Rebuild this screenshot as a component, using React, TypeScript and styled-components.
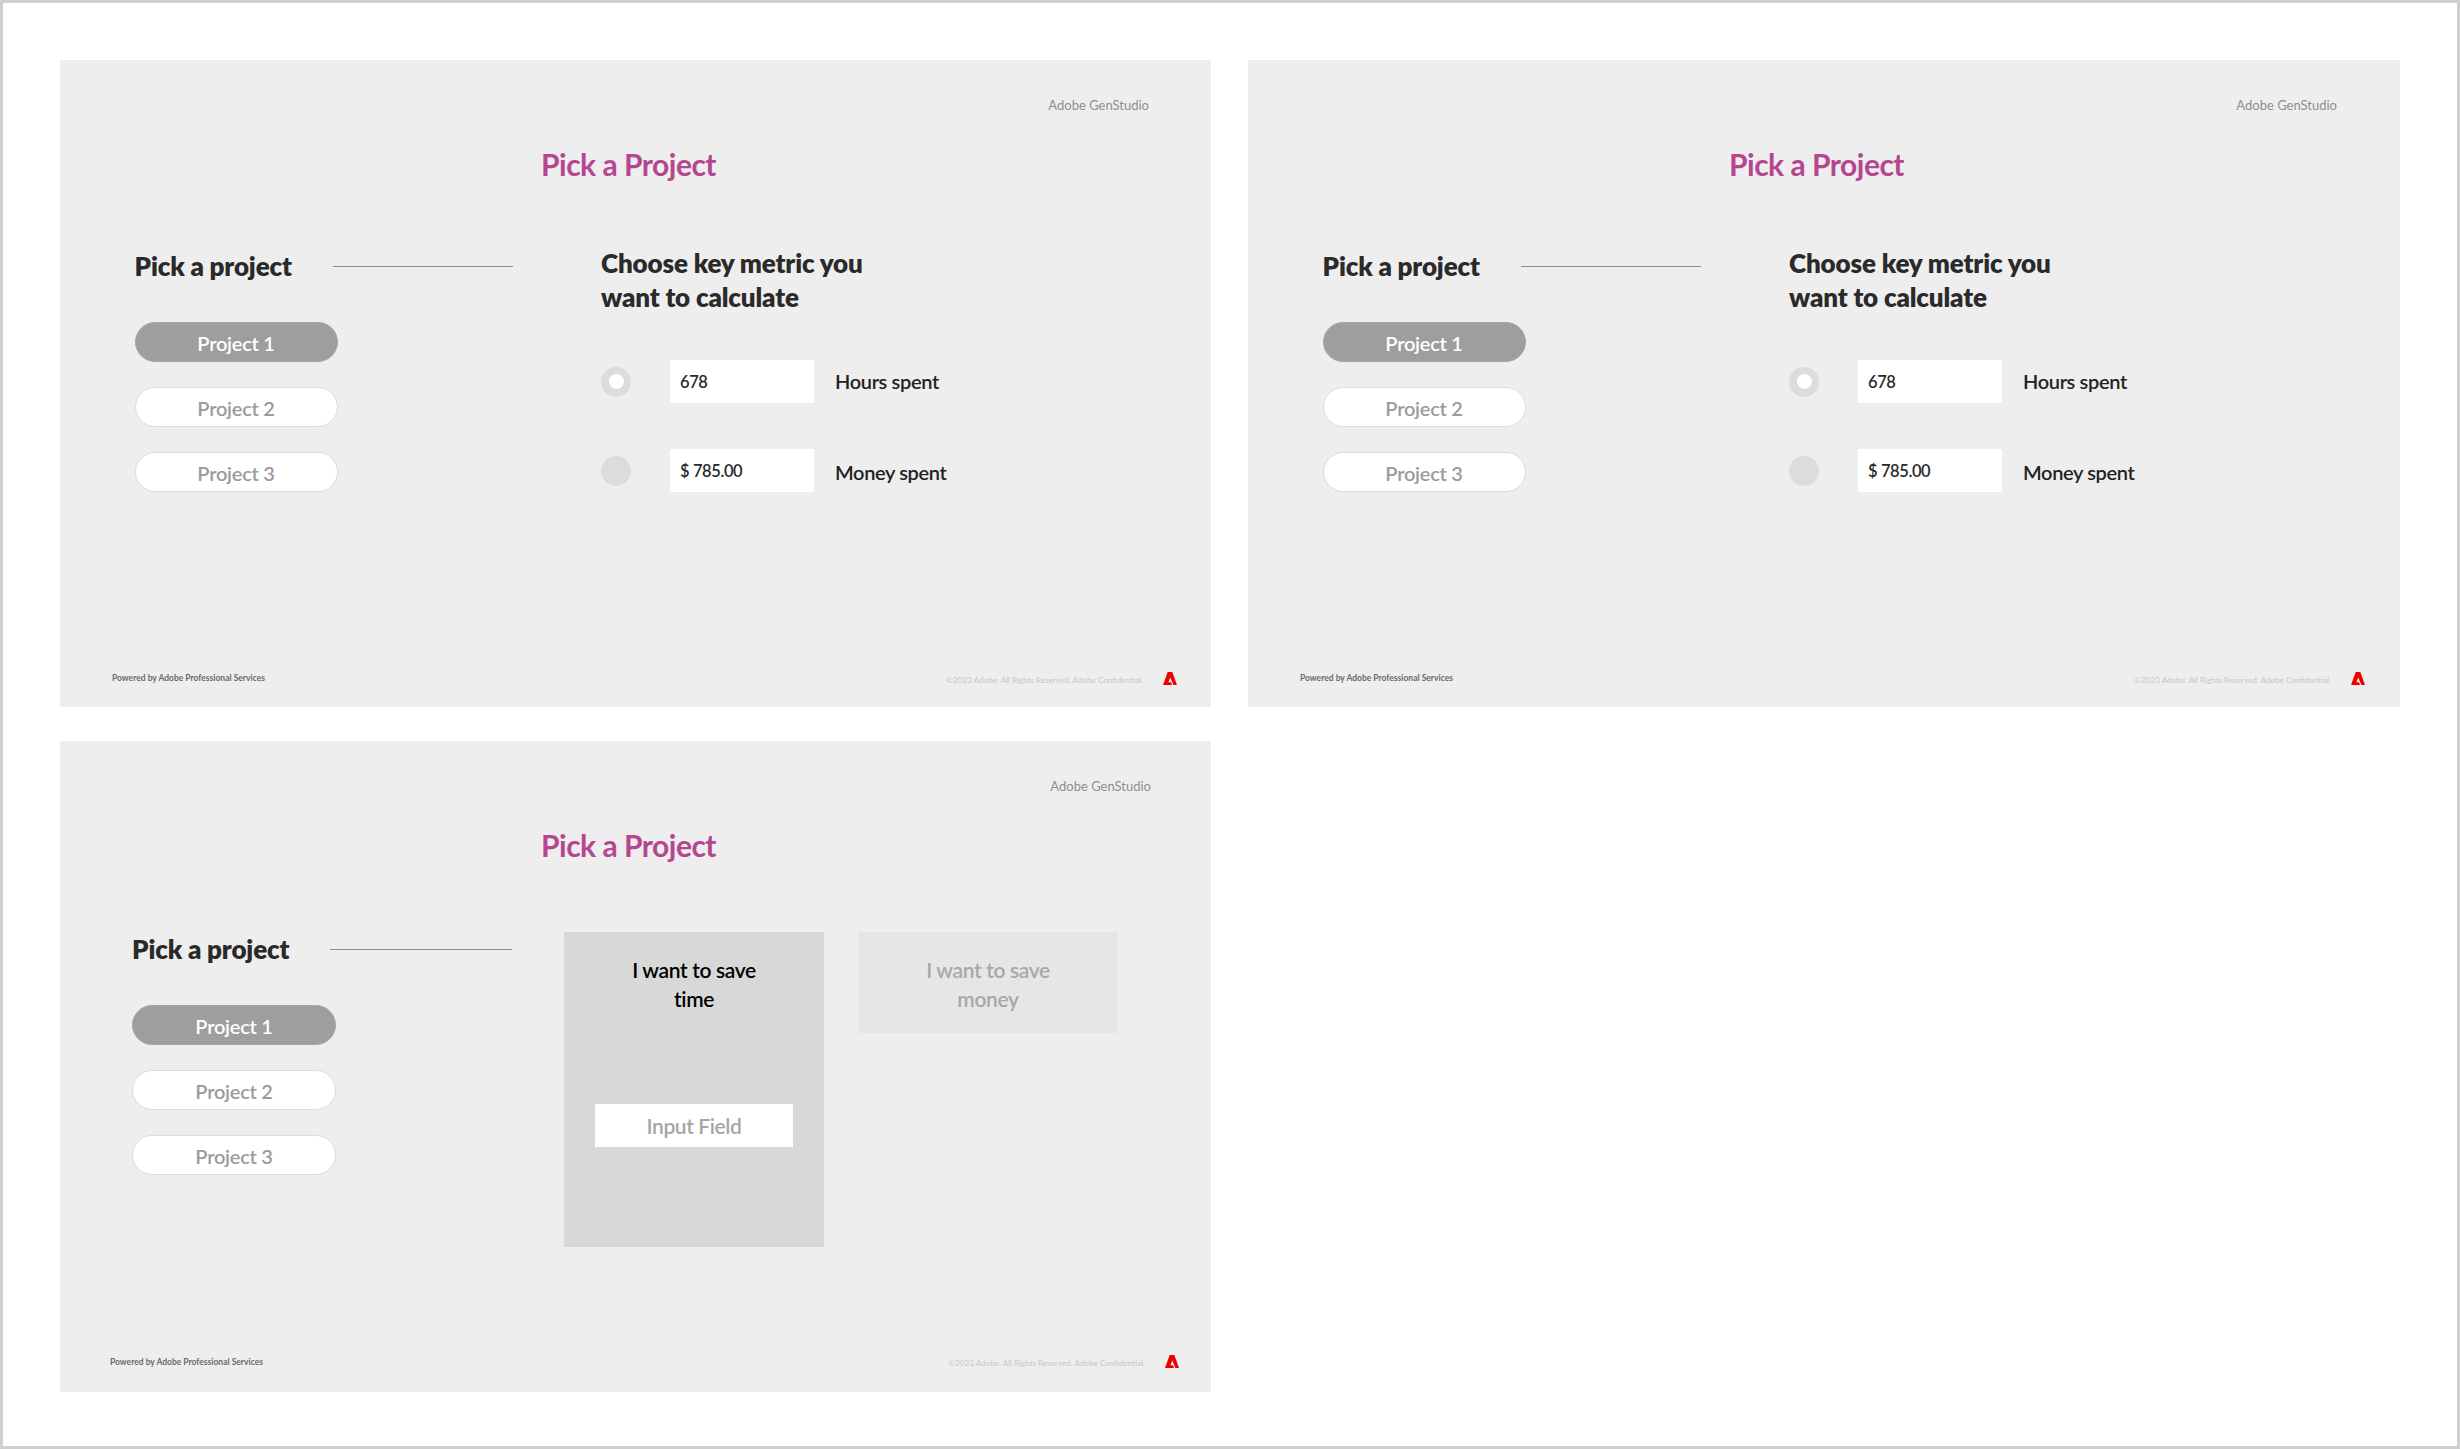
import React from "react";
import styled, { createGlobalStyle } from "styled-components";

const Global = createGlobalStyle`
  html, body { margin: 0; padding: 0; background: #fff; }
  body { font-family: Lato, "Noto Sans", "Liberation Sans", sans-serif; }
  * { box-sizing: border-box; }
`;

const Page = styled.div`
  width: 2460px;
  height: 1449px;
  border: 3px solid #cfcfcf;
  padding: 57px 57px 0;
  display: grid;
  grid-template-columns: 1151px 1152px;
  grid-template-rows: 647px 651px;
  column-gap: 37px;
  row-gap: 34px;
  background: #fff;
`;

const Panel = styled.section`
  background: #eeeeee;
  display: flex;
  flex-direction: column;
  min-width: 0;
`;

const Brand = styled.div<{ $right: number }>`
  padding: 36px ${(p) => p.$right}px 0 0;
  height: 54px;
  line-height: 18px;
  font-size: 13px;
  color: #8f8f8f;
  text-align: right;
`;

const Title = styled.h1`
  margin: 30px 0 0;
  padding-left: 481px;
  font-size: 30px;
  line-height: 40px;
  font-weight: 700;
  letter-spacing: -0.5px;
  color: #b5468f;
`;

const Body = styled.div<{ $left: number; $top: number; $gap: number }>`
  display: flex;
  align-items: flex-start;
  margin-top: ${(p) => p.$top}px;
  padding-left: ${(p) => p.$left}px;
  gap: ${(p) => p.$gap}px;
`;

const LeftColumn = styled.div<{ $top: number; $width: number }>`
  width: ${(p) => p.$width}px;
  padding-top: ${(p) => p.$top}px;
  flex: none;
`;

const HeadingRow = styled.div`
  display: flex;
  align-items: center;
  height: 34px;
  gap: 41px;
`;

const Heading = styled.h2`
  margin: 0;
  font-size: 26px;
  line-height: 34px;
  font-weight: 800;
  letter-spacing: -0.15px;
  color: #2a2a2a;
  white-space: nowrap;
  flex: none;
`;

const Rule = styled.div`
  flex: 1;
  height: 1px;
  background: #8d8d8d;
`;

const Pills = styled.div`
  margin-top: 39px;
  display: flex;
  flex-direction: column;
  gap: 25px;
`;

const Pill = styled.div<{ $active?: boolean; $width: number }>`
  width: ${(p) => p.$width}px;
  height: 40px;
  border-radius: 20px;
  display: flex;
  align-items: center;
  justify-content: center;
  padding-top: 1px;
  font-size: 20px;
  font-weight: 600;
  letter-spacing: -0.25px;
  background: ${(p) => (p.$active ? "#9e9e9e" : "#ffffff")};
  color: ${(p) => (p.$active ? "#ffffff" : "#9b9b9b")};
  border: 1px solid ${(p) => (p.$active ? "#a6a6a6" : "#dcdcdc")};
`;

const MetricColumn = styled.div`
  flex: none;
`;

const Metric = styled.div<{ $top: number }>`
  display: flex;
  align-items: center;
  margin-top: ${(p) => p.$top}px;
`;

const Radio = styled.span<{ $selected?: boolean }>`
  width: 30px;
  height: 30px;
  border-radius: 50%;
  background: #dcdcdc;
  display: flex;
  align-items: center;
  justify-content: center;
  flex: none;
  margin-right: 39px;
  &::after {
    content: "";
    display: ${(p) => (p.$selected ? "block" : "none")};
    width: 15px;
    height: 15px;
    border-radius: 50%;
    background: #fff;
  }
`;

const ValueBox = styled.div`
  width: 144px;
  height: 43px;
  background: #fff;
  border-radius: 2px;
  display: flex;
  align-items: center;
  padding-left: 10px;
  font-size: 16.5px;
  font-weight: 600;
  letter-spacing: -0.4px;
  color: #2a2a2a;
  flex: none;
`;

const MetricLabel = styled.span<{ $raised?: boolean }>`
  margin-left: 21px;
  padding: ${(p) => (p.$raised ? "0 0 2px" : "2px 0 0")};
  font-size: 20px;
  font-weight: 600;
  letter-spacing: -0.35px;
  color: #222;
`;

const Cards = styled.div`
  display: flex;
  align-items: flex-start;
  gap: 34px;
`;

const Card = styled.div<{ $active?: boolean }>`
  width: 260px;
  height: ${(p) => (p.$active ? 315 : 101)}px;
  padding-top: 23px;
  background: ${(p) => (p.$active ? "#d8d8d8" : "#e6e6e6")};
  color: ${(p) => (p.$active ? "#000" : "#a8a8a8")};
  display: flex;
  flex-direction: column;
  align-items: center;
`;

const CardText = styled.div`
  font-size: 21px;
  line-height: 29px;
  font-weight: 600;
  letter-spacing: -0.35px;
  text-align: center;
  width: 160px;
`;

const FieldBox = styled.div`
  width: 198px;
  height: 43px;
  margin-top: 91px;
  background: #fff;
  display: flex;
  align-items: center;
  justify-content: center;
  font-size: 21px;
  font-weight: 600;
  letter-spacing: -0.4px;
  color: #a6a6a6;
`;

const Footer = styled.footer<{ $left: number; $right: number; $bottom: number }>`
  margin-top: auto;
  padding: 0 ${(p) => p.$right}px ${(p) => p.$bottom}px ${(p) => p.$left}px;
  display: flex;
  align-items: center;
  justify-content: space-between;
`;

const Powered = styled.span<{ $lift: number }>`
  padding-bottom: ${(p) => p.$lift}px;
  font-size: 8.5px;
  font-weight: 700;
  color: #6a6a6a;
`;

const FooterRight = styled.div`
  display: flex;
  align-items: center;
  gap: 20px;
`;

const Copyright = styled.span`
  padding-top: 2px;
  font-size: 8.1px;
  color: #c6c6c6;
`;

const LogoSvg = styled.svg`
  width: 14px;
  height: 13px;
  display: block;
  flex: none;
`;

const AdobeLogo = () => (
  <LogoSvg viewBox="0 0 14 13" aria-hidden="true">
    <path
      fill="#ee0000"
      fillRule="evenodd"
      d="M4.7 0H9.3L14 13H0ZM7.3 5.6 5.4 10.2H8L9 13H10.4Z"
    />
  </LogoSvg>
);

const projects = ["Project 1", "Project 2", "Project 3"];

const PickColumn = ({ top, width, pill }: { top: number; width: number; pill: number }) => (
  <LeftColumn $top={top} $width={width}>
    <HeadingRow>
      <Heading>Pick a project</Heading>
      <Rule />
    </HeadingRow>
    <Pills>
      {projects.map((name, i) => (
        <Pill key={name} $active={i === 0} $width={pill}>
          {name}
        </Pill>
      ))}
    </Pills>
  </LeftColumn>
);

const Chrome = ({
  brandRight,
  footer,
  lift,
  children,
}: {
  brandRight: number;
  footer: { left: number; right: number; bottom: number };
  lift: number;
  children: React.ReactNode;
}) => (
  <Panel>
    <Brand $right={brandRight}>Adobe GenStudio</Brand>
    <Title>Pick a Project</Title>
    {children}
    <Footer $left={footer.left} $right={footer.right} $bottom={footer.bottom}>
      <Powered $lift={lift}>Powered by Adobe Professional Services</Powered>
      <FooterRight>
        <Copyright>©2023 Adobe. All Rights Reserved. Adobe Confidential.</Copyright>
        <AdobeLogo />
      </FooterRight>
    </Footer>
  </Panel>
);

const MetricPanel = ({ brandRight, right }: { brandRight: number; right: number }) => (
  <Chrome brandRight={brandRight} footer={{ left: 52, right, bottom: 22 }} lift={2}>
    <Body $left={74.5} $top={62} $gap={88}>
      <PickColumn top={3} width={378.5} pill={203} />
      <MetricColumn>
        <Heading>
          Choose key metric you
          <br />
          want to calculate
        </Heading>
        <Metric $top={46}>
          <Radio $selected />
          <ValueBox>678</ValueBox>
          <MetricLabel $raised>Hours spent</MetricLabel>
        </Metric>
        <Metric $top={46}>
          <Radio />
          <ValueBox>$ 785.00</ValueBox>
          <MetricLabel>Money spent</MetricLabel>
        </Metric>
      </MetricColumn>
    </Body>
  </Chrome>
);

export default function App() {
  return (
    <>
      <Global />
      <Page>
        <MetricPanel brandRight={62} right={34} />
        <MetricPanel brandRight={63} right={35} />
        <Chrome brandRight={60} footer={{ left: 50, right: 32, bottom: 24 }} lift={0}>
          <Body $left={72} $top={67} $gap={52}>
            <PickColumn top={0} width={380} pill={204} />
            <Cards>
              <Card $active>
                <CardText>I want to save time</CardText>
                <FieldBox>Input Field</FieldBox>
              </Card>
              <Card>
                <CardText>I want to save money</CardText>
              </Card>
            </Cards>
          </Body>
        </Chrome>
      </Page>
    </>
  );
}
